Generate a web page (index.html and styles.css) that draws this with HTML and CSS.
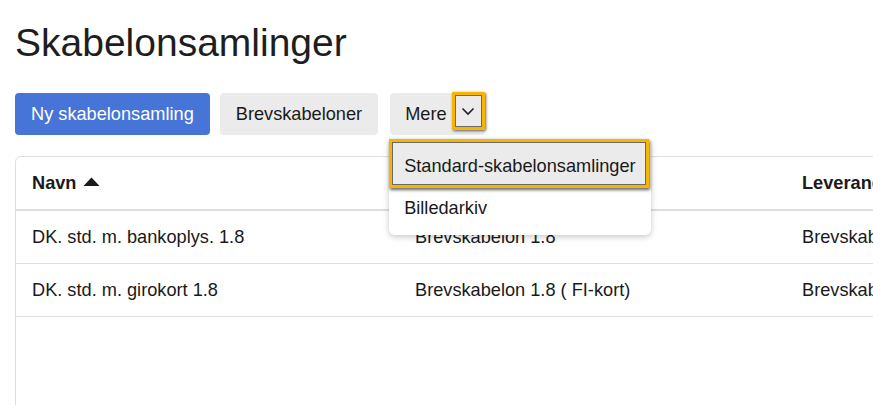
FILE: index.html
```html
<!DOCTYPE html>
<html lang="da">
<head>
<meta charset="utf-8">
<title>Skabelonsamlinger</title>
<link rel="stylesheet" href="styles.css">
</head>
<body>
<div class="page">
  <h1 class="title">Skabelonsamlinger</h1>
  <div class="toolbar">
    <button class="btn btn-primary">Ny skabelonsamling</button>
    <button class="btn btn-secondary">Brevskabeloner</button>
    <div class="more">
      <button class="btn btn-secondary btn-more">
        <span class="more-label">Mere</span>
        <span class="toggle">
          <svg width="14" height="9" viewBox="0 0 14 9"><path d="M1.5 1.5 L7 7 L12.5 1.5" fill="none" stroke="#222" stroke-width="1.6"/></svg>
        </span>
      </button>
      <div class="menu">
        <div class="menu-item active">Standard-skabelonsamlinger</div>
        <div class="menu-item">Billedarkiv</div>
      </div>
    </div>
  </div>
  <div class="card">
    <div class="row head">
      <div class="cell">Navn <svg class="sort" width="17" height="9" viewBox="0 0 17 9"><path d="M0.5 9 L8.5 0.5 L16.5 9 Z" fill="#1a1a1a"/></svg></div>
      <div class="cell">Brevskabelon</div>
      <div class="cell">Leverandør</div>
    </div>
    <div class="row">
      <div class="cell">DK. std. m. bankoplys. 1.8</div>
      <div class="cell">Brevskabelon 1.8</div>
      <div class="cell">Brevskabelonleverandør</div>
    </div>
    <div class="row">
      <div class="cell">DK. std. m. girokort 1.8</div>
      <div class="cell">Brevskabelon 1.8 ( FI-kort)</div>
      <div class="cell">Brevskabelonleverandør</div>
    </div>
  </div>
</div>
</body>
</html>
```

FILE: styles.css
```css
html, body {
  margin: 0;
  padding: 0;
  background: #fff;
  overflow: hidden;
  height: 405px;
}
body {
  font-family: "Liberation Sans", Arial, sans-serif;
  color: #1a1a1a;
  font-size: 18.2px;
}
.page {
  padding: 20px 0 0 15px;
  width: 1400px;
}
.title {
  font-size: 39px;
  font-weight: 400;
  line-height: 46px;
  margin: 0 0 27px 0;
  color: #1e1e1e;
}
.toolbar {
  display: flex;
  align-items: flex-start;
  position: relative;
  z-index: 2;
}
.btn {
  font-family: inherit;
  font-size: 18.2px;
  height: 42px;
  border: none;
  border-radius: 4px;
  padding: 0 16px;
  margin: 0;
  cursor: pointer;
  color: #1a1a1a;
}
.btn-primary {
  background: #4674d7;
  color: #fff;
  margin-right: 10px;
}
.btn-secondary {
  background: #ebebeb;
  margin-right: 12px;
}
.more {
  position: relative;
}
.btn-more {
  display: flex;
  align-items: flex-start;
  padding: 0 0 0 15px;
  margin-right: 0;
}
.more-label {
  line-height: 42px;
}
.toggle {
  margin-left: 5px;
  margin-top: -1px;
  width: 27px;
  height: 32px;
  border: 3px solid #f7b500;
  box-shadow: inset 0 0 0 1px rgba(0,0,0,0.55), 1px 1px 3px rgba(0,0,0,0.6);
  display: flex;
  align-items: center;
  justify-content: center;
  border-radius: 1px;
}
.menu {
  position: absolute;
  left: -1px;
  top: 46px;
  width: 262px;
  background: #fff;
  border-radius: 6px;
  box-shadow: 0 2px 6px rgba(0,0,0,0.22);
  padding: 0 0 7px 0;
}
.menu-item {
  padding: 8px 15px;
  line-height: 24px;
  white-space: nowrap;
}
.menu-item.active {
  background: #ebebeb;
  border: 3px solid #f7b500;
  padding: 12px 12px 7px;
  box-shadow: inset 0 0 0 1px rgba(0,0,0,0.55), 1px 2px 3px rgba(0,0,0,0.6);
  width: 260px;
  box-sizing: border-box;
}
.card {
  margin-top: 21px;
  border: 1px solid #dedede;
  border-radius: 6px;
  height: 400px;
  width: 1300px;
  position: relative;
  z-index: 1;
}
.row {
  display: grid;
  grid-template-columns: 383px 387px 1fr;
  height: 52px;
  align-items: center;
  border-bottom: 1px solid #dedede;
}
.row.head {
  font-weight: 700;
  border-bottom: 2px solid #dedede;
}
.cell {
  padding-left: 16px;
  white-space: nowrap;
  display: flex;
  align-items: center;
}
.sort {
  margin-left: 7px;
  margin-top: -4px;
}
```
